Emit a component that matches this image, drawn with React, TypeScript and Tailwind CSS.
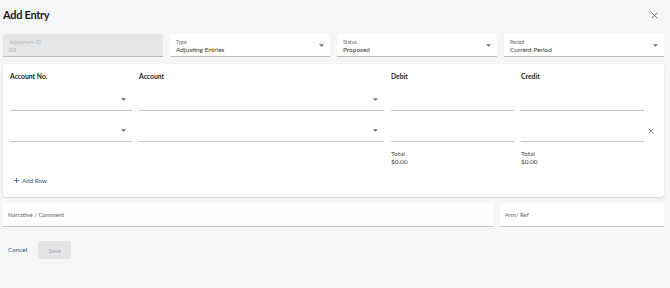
import React from "react";

const Caret = () => (
  <svg width="5" height="3" viewBox="0 0 10 5" className="shrink-0">
    <path d="M0 0 L5 5 L10 0 Z" fill="#666" />
  </svg>
);

const XIcon = ({ size = 8, color = "#666" }: { size?: number; color?: string }) => (
  <svg width={size} height={size} viewBox="0 0 10 10">
    <path d="M1 1 L9 9 M9 1 L1 9" stroke={color} strokeWidth="1.1" />
  </svg>
);

const TopField = ({ label, value, disabled, caret }: { label: string; value: string; disabled?: boolean; caret?: boolean }) => (
  <div
    className={`flex-1 h-[23px] flex items-center pl-[6px] pr-[6px] border-b border-[#bdbdbd] ${
      disabled ? "bg-[#e6e7e9] rounded-t-[3px]" : "bg-white"
    }`}
  >
    <div className="flex-1 flex flex-col justify-center leading-none pt-[2px]">
      <span className={`text-[5px] leading-[6px] ${disabled ? "text-[#b5b5b5]" : "text-[#666]"}`}>{label}</span>
      <span className={`text-[6.5px] leading-[9px] ${disabled ? "text-[#ababab]" : "text-[#3a3a3a]"}`}>{value}</span>
    </div>
    {caret && <Caret />}
  </div>
);

const Line = ({ caret, w }: { caret?: boolean; w: string }) => (
  <div className={`${w} h-[23px] border-b border-[#c6c6c6] flex items-center justify-end pr-[6px]`}>
    {caret && <Caret />}
  </div>
);

export default function App() {
  return (
    <div
      className="w-[670px] h-[288px] bg-[#f5f6f8] pl-[3px] pr-[6px] overflow-hidden"
      style={{ fontFamily: "Lato, 'Noto Sans', sans-serif" }}
    >
      <div className="h-[34px] flex items-center justify-between pb-[4px]">
        <h1 className="text-[11px] font-bold text-[#1b1b1b] tracking-[-0.3px]">Add Entry</h1>
        <div className="pr-[6px]">
          <XIcon size={7} color="#555" />
        </div>
      </div>

      <div className="flex gap-[7px]">
        <TopField label="Adjustment ID" value="01" disabled />
        <TopField label="Type" value="Adjusting Entries" caret />
        <TopField label="Status" value="Proposed" caret />
        <TopField label="Period" value="Current Period" caret />
      </div>

      <div className="mt-[7px] h-[133px] bg-white rounded-[3px] shadow-[0_1px_2px_rgba(0,0,0,0.15)] pl-[7px] pt-[7px]">
        <div className="flex gap-[7px] text-[6.8px] font-bold text-[#222] h-[10px] items-center">
          <div className="w-[122px]">Account No.</div>
          <div className="w-[245px]">Account</div>
          <div className="w-[123px]">Debit</div>
          <div className="w-[123px]">Credit</div>
        </div>

        <div className="flex gap-[7px] mt-[7px] items-end">
          <Line w="w-[122px]" caret />
          <Line w="w-[245px]" caret />
          <Line w="w-[123px]" />
          <Line w="w-[123px]" />
        </div>
        <div className="flex gap-[7px] mt-[8px] items-end">
          <Line w="w-[122px]" caret />
          <Line w="w-[245px]" caret />
          <Line w="w-[123px]" />
          <Line w="w-[123px]" />
          <div className="h-[23px] flex items-center -ml-[3px]">
            <XIcon size={6} color="#666" />
          </div>
        </div>

        <div className="flex gap-[7px] mt-[8px] text-[6.5px] leading-[8px] text-[#444]">
          <div className="w-[122px]" />
          <div className="w-[245px]" />
          <div className="w-[123px] flex flex-col">
            <span>Total</span>
            <span>$0.00</span>
          </div>
          <div className="w-[123px] flex flex-col">
            <span>Total</span>
            <span>$0.00</span>
          </div>
        </div>

        <div className="mt-[10px] ml-[4px] flex items-center gap-[3px] text-[6.3px] text-[#3a5677]">
          <svg width="5" height="5" viewBox="0 0 10 10">
            <path d="M5 0 V10 M0 5 H10" stroke="#3a5677" strokeWidth="1.5" />
          </svg>
          <span>Add Row</span>
        </div>
      </div>

      <div className="mt-[6px] flex gap-[7px]">
        <div className="flex-1 h-[24px] bg-[#fdfdfd] border-b border-[#c4c4c4] flex items-center pl-[5px] text-[6px] text-[#666]">
          Narrative / Comment
        </div>
        <div className="w-[164px] h-[24px] bg-white border-b border-[#c4c4c4] flex items-center pl-[5px] text-[6px] text-[#666]">
          Ann/ Ref
        </div>
      </div>

      <div className="mt-[14px] flex items-center gap-[11px] pl-[5px]">
        <span className="text-[6.5px] text-[#3a5677]">Cancel</span>
        <button className="w-[33px] h-[18px] bg-[#e3e4e6] rounded-[2px] text-[6px] text-[#ababab]">Save</button>
      </div>
    </div>
  );
}
